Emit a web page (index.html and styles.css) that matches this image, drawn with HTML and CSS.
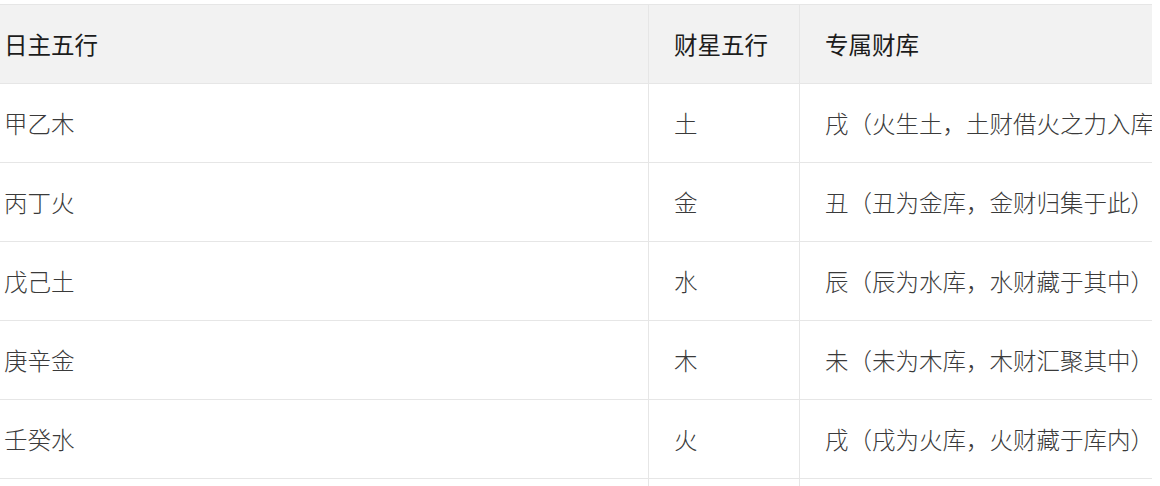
FILE: index.html
```html
<!DOCTYPE html>
<html lang="zh-CN">
<head>
<meta charset="utf-8">
<link rel="stylesheet" href="styles.css">
</head>
<body>
<div class="scroller">
  <table class="wealth">
    <colgroup>
      <col class="c1"><col class="c2"><col class="c3">
    </colgroup>
    <thead>
      <tr><th>日主五行</th><th>财星五行</th><th>专属财库</th></tr>
    </thead>
    <tbody>
      <tr><td>甲乙木</td><td>土</td><td>戌（火生土，土财借火之力入库）</td></tr>
      <tr><td>丙丁火</td><td>金</td><td>丑（丑为金库，金财归集于此）</td></tr>
      <tr><td>戊己土</td><td>水</td><td>辰（辰为水库，水财藏于其中）</td></tr>
      <tr><td>庚辛金</td><td>木</td><td>未（未为木库，木财汇聚其中）</td></tr>
      <tr><td>壬癸水</td><td>火</td><td>戌（戌为火库，火财藏于库内）</td></tr>
      <tr><td>&nbsp;</td><td>&nbsp;</td><td>&nbsp;</td></tr>
    </tbody>
  </table>
</div>
</body>
</html>
```
FILE: styles.css
```css
html, body {
  margin: 0;
  padding: 0;
  background: #ffffff;
}
body {
  font-family: "Noto Sans CJK SC", "Noto Sans", sans-serif;
}
.scroller {
  width: 1152px;
  height: 486px;
  overflow: hidden;
  padding-top: 4px;
  box-sizing: border-box;
}
.wealth {
  margin-left: -22px;
  border-collapse: collapse;
  table-layout: fixed;
  width: 1240px;
  font-size: 23.5px;
  line-height: 32px;
}
.c1 { width: 670px; }
.c2 { width: 151px; }
.c3 { width: 419px; }
.wealth th,
.wealth td {
  border: 1px solid #e6e6e6;
  padding: 0 25px;
  height: 79px;
  box-sizing: border-box;
  text-align: left;
  white-space: nowrap;
  vertical-align: middle;
}
.wealth th {
  background: #f2f2f2;
  color: #1c1c1c;
  font-weight: 400;
}
.wealth td {
  color: #3a3a3a;
  font-weight: 300;
}
```
